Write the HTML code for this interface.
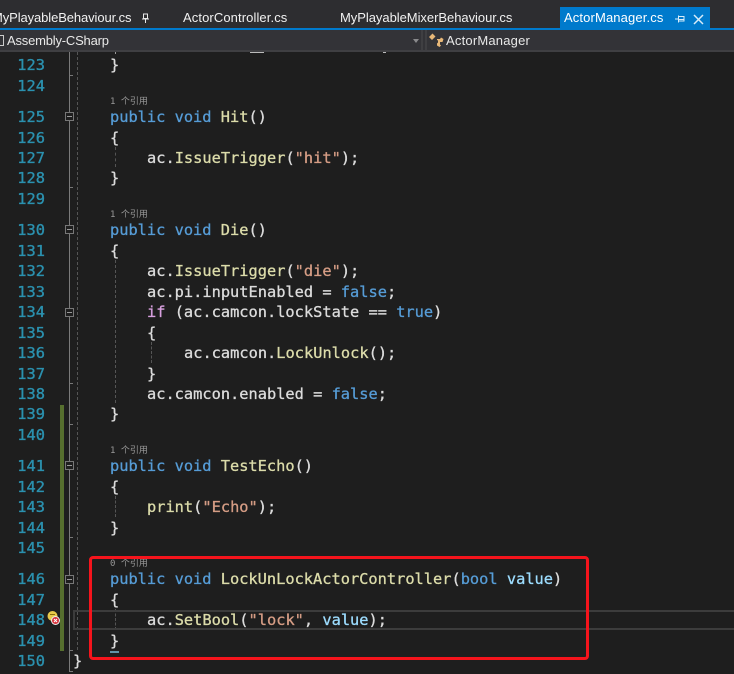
<!DOCTYPE html>
<html><head><meta charset="utf-8">
<style>
html,body{margin:0;padding:0;background:#1e1e1e}
#r{position:relative;width:734px;height:674px;overflow:hidden;background:#1e1e1e}
#r div,#r svg{position:absolute}
.t{font:13px/16px "Liberation Sans","Noto Sans CJK SC",sans-serif;color:#f1f1f1;white-space:pre}
.n{left:14px;width:31px;text-align:right;font:15.36px/20px "DejaVu Sans Mono",monospace;-webkit-text-stroke:.35px #2b91af;color:#2b91af;height:20px;margin-top:1px}
.c{font:15.33px/20px "DejaVu Sans Mono",monospace;-webkit-text-stroke:.3px;color:#dcdcdc;white-space:pre;height:20px;margin-top:1px}
.h{font:9px/10px "DejaVu Sans Mono","Noto Sans CJK SC",monospace;color:#999;white-space:pre}
.k{color:#569cd6}.f{color:#dcdcaa}.s{color:#d69d85}.p{color:#9cdcfe}.m{color:#d8a0df}
.o{left:65px;width:9px;height:9px;box-sizing:border-box;border:1px solid #777;background:#1e1e1e}
.o:after{content:"";position:absolute;left:1px;top:3px;width:5px;height:1px;background:#999}
.tk{left:70px;width:3px;height:1px;background:#777}
.g{width:0;border-left:1px dashed #555}
</style></head><body><div id="r">
<div style="left:0;top:0;width:734px;height:52px;background:#2d2d30"></div>
<div style="left:0;top:28px;width:734px;height:2px;background:#007acc"></div>
<div style="left:560px;top:7px;width:150px;height:21px;background:#007acc"></div>
<div class="t" style="left:-8px;top:10px;letter-spacing:-.1px">MyPlayableBehaviour.cs</div>
<svg style="left:141px;top:13px" width="9" height="11" viewBox="0 0 9 11"><path d="M2.5 1h4v4.5h-4zM1 6h7M4.5 6v4" stroke="#e8e8e8" fill="none"/></svg>
<div class="t" style="left:183px;top:10px;letter-spacing:.1px">ActorController.cs</div>
<div class="t" style="left:340px;top:10px;letter-spacing:-.04px">MyPlayableMixerBehaviour.cs</div>
<div class="t" style="left:564px;top:10px;color:#fff;letter-spacing:.13px">ActorManager.cs</div>
<svg style="left:675px;top:14px" width="10" height="10" viewBox="0 0 10 10"><path d="M0 5h3.500M3.500 1.500v7M3.500 2.500h5.500v4.500h-5.500M3.500 5.500h5.500" stroke="#d8ecf8" fill="none"/></svg>
<svg style="left:693px;top:14px" width="11" height="11" viewBox="0 0 11 11"><path d="M1 1l9 9M10 1l-9 9" stroke="#d8ecf8" stroke-width="1.500" fill="none"/></svg>

<div style="left:0;top:30px;width:734px;height:20px;background:#333337"></div>
<div style="left:0;top:50px;width:734px;height:2px;background:#3f3f42"></div>
<div style="left:421px;top:30px;width:2px;height:21px;background:#3f3f42"></div>
<div style="left:425px;top:30px;width:2px;height:21px;background:#3f3f42"></div>
<div style="left:-7px;top:35px;width:9px;height:9px;border:1px solid #ccc"></div>
<div class="t" style="left:7px;top:33px;color:#e8e8e8;letter-spacing:-.2px">Assembly-CSharp</div>
<svg style="left:412px;top:39px" width="8" height="5" viewBox="0 0 8 5"><path d="M1 0h6l-3 4z" fill="#8a8a8c"/></svg>
<svg style="left:429px;top:33px" width="15" height="15" viewBox="0 0 15 15"><path d="M0 4l3.500-3.500 3 3-3.500 3.500zM8 6h3l1-1.500 2.500 1.500-1 3h-2.500v2.500l1 1-1.500 1.500-2.500-1.500v-2l1-1v-2l-1-.5z" fill="#e8b878"/></svg>
<div class="t" style="left:446px;top:33px;color:#e8e8e8;letter-spacing:.2px">ActorManager</div>

<div style="left:250px;top:52px;width:14px;height:1px;background:#bbb"></div>
<div style="left:383px;top:52px;width:3px;height:1px;background:#bbb"></div>
<div style="left:115px;top:52px;width:1px;height:2px;background:#999"></div>

<!-- guides -->
<div style="left:60px;top:405px;width:4px;height:246px;background:#566f2e"></div>
<div style="left:69px;top:52px;width:1px;height:603px;background:#7a7a7a"></div>
<div class="g" style="left:77px;top:52px;height:598px"></div>
<div class="tk" style="top:75px"></div><div class="tk" style="top:187px"></div><div class="tk" style="top:383px"></div><div class="tk" style="top:424px"></div><div class="tk" style="top:537px"></div><div class="tk" style="top:650px"></div>
<div style="left:69px;top:671px;width:4px;height:1px;background:#7a7a7a"></div>
<div style="left:69px;top:655px;width:1px;height:17px;background:#7a7a7a"></div>
<div class="o" style="top:112px"></div><div class="o" style="top:225px"></div><div class="o" style="top:308px"></div><div class="o" style="top:461px"></div><div class="o" style="top:575px"></div>
<div class="g" style="left:115px;top:147px;height:20px"></div>
<div class="g" style="left:115px;top:260px;height:143px"></div>
<div class="g" style="left:151px;top:342px;height:21px"></div>
<div class="g" style="left:115px;top:496px;height:21px"></div>
<div class="g" style="left:115px;top:609px;height:21px"></div>

<!-- current line -->
<div style="left:73px;top:610px;width:670px;height:20px;box-sizing:border-box;border:2px solid #3c3c3c;border-right:0"></div>

<!-- line numbers -->
<div class="n" style="top:54px">123</div><div class="n" style="top:75px">124</div><div class="n" style="top:106px">125</div><div class="n" style="top:127px">126</div><div class="n" style="top:147px">127</div><div class="n" style="top:167px">128</div><div class="n" style="top:188px">129</div><div class="n" style="top:219px">130</div><div class="n" style="top:240px">131</div><div class="n" style="top:260px">132</div><div class="n" style="top:281px">133</div><div class="n" style="top:301px">134</div><div class="n" style="top:322px">135</div><div class="n" style="top:342px">136</div><div class="n" style="top:363px">137</div><div class="n" style="top:383px">138</div><div class="n" style="top:403px">139</div><div class="n" style="top:424px">140</div><div class="n" style="top:455px">141</div><div class="n" style="top:476px">142</div><div class="n" style="top:496px">143</div><div class="n" style="top:517px">144</div><div class="n" style="top:537px">145</div><div class="n" style="top:568px">146</div><div class="n" style="top:589px">147</div><div class="n" style="top:609px">148</div><div class="n" style="top:630px">149</div><div class="n" style="top:650px">150</div>

<!-- code -->
<div class="c" style="left:110px;top:54px">}</div>
<div class="h" style="left:110px;top:97px">1 个引用</div>
<div class="c" style="left:110px;top:106px"><span class="k">public void</span> <span class="f">Hit</span>()</div>
<div class="c" style="left:110px;top:127px">{</div>
<div class="c" style="left:147px;top:147px">ac.<span class="f">IssueTrigger</span>(<span class="s">"hit"</span>);</div>
<div class="c" style="left:110px;top:167px">}</div>
<div class="h" style="left:110px;top:210px">1 个引用</div>
<div class="c" style="left:110px;top:219px"><span class="k">public void</span> <span class="f">Die</span>()</div>
<div class="c" style="left:110px;top:240px">{</div>
<div class="c" style="left:147px;top:260px">ac.<span class="f">IssueTrigger</span>(<span class="s">"die"</span>);</div>
<div class="c" style="left:147px;top:281px">ac.pi.inputEnabled = <span class="k">false</span>;</div>
<div class="c" style="left:147px;top:301px"><span class="m">if</span> (ac.camcon.lockState == <span class="k">true</span>)</div>
<div class="c" style="left:147px;top:322px">{</div>
<div class="c" style="left:184px;top:342px">ac.camcon.<span class="f">LockUnlock</span>();</div>
<div class="c" style="left:147px;top:363px">}</div>
<div class="c" style="left:147px;top:383px">ac.camcon.enabled = <span class="k">false</span>;</div>
<div class="c" style="left:110px;top:403px">}</div>
<div class="h" style="left:110px;top:446px">1 个引用</div>
<div class="c" style="left:110px;top:455px"><span class="k">public void</span> <span class="f">TestEcho</span>()</div>
<div class="c" style="left:110px;top:476px">{</div>
<div class="c" style="left:147px;top:496px"><span class="f">print</span>(<span class="s">"Echo"</span>);</div>
<div class="c" style="left:110px;top:517px">}</div>
<div class="h" style="left:110px;top:559px">0 个引用</div>
<div class="c" style="left:110px;top:568px"><span class="k">public void</span> <span class="f">LockUnLockActorController</span>(<span class="k">bool</span> <span class="p">value</span>)</div>
<div class="c" style="left:110px;top:589px">{</div>
<div class="c" style="left:147px;top:609px">ac.<span class="f">SetBool</span>(<span class="s">"lock"</span>, <span class="p">value</span>);</div>
<div class="c" style="left:110px;top:630px">}</div>
<div style="left:110px;top:651px;width:9px;height:2px;background:#5f93a8"></div>
<div class="c" style="left:73px;top:650px">}</div>

<!-- bulb -->
<svg style="left:47px;top:611px" width="13" height="14" viewBox="0 0 13 14"><circle cx="5.500" cy="5" r="5" fill="#e8c94a"/><rect x="3" y="3" width="5" height="1" fill="#8a6d10"/><circle cx="8.500" cy="9.500" r="4.500" fill="#eee"/><circle cx="8.500" cy="9.500" r="3.500" fill="#d8323c"/><path d="M7 8l3 3M10 8l-3 3" stroke="#fff"/></svg>

<!-- red box -->
<div style="left:89px;top:556px;width:500px;height:104px;box-sizing:border-box;border:3px solid #f5141c;border-radius:4px"></div>
</div></body></html>
